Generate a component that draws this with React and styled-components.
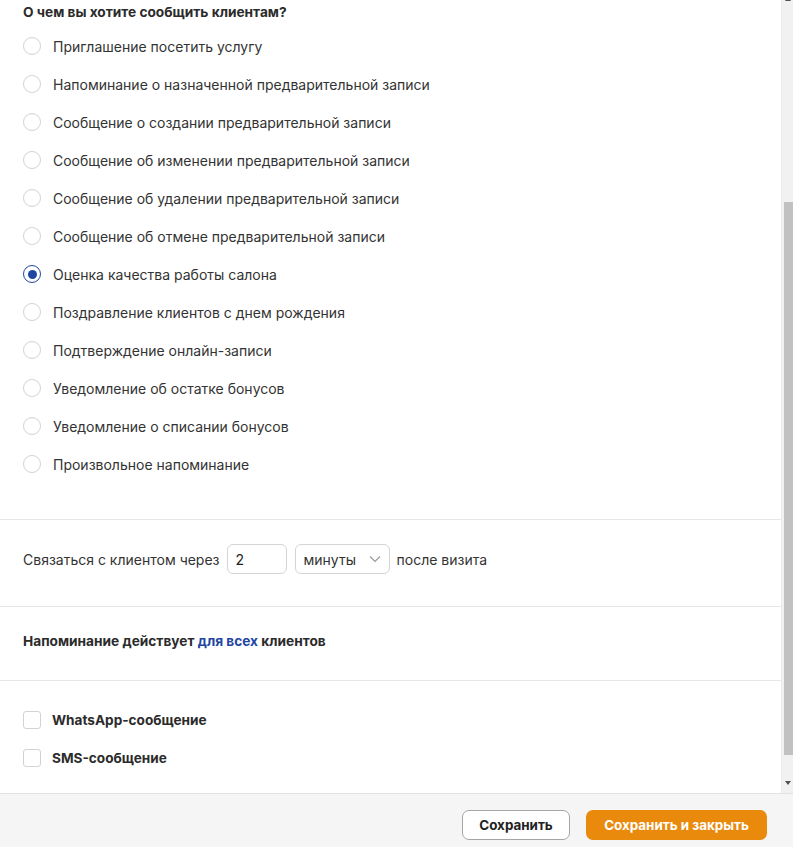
import React from 'react';
import styled, { createGlobalStyle } from 'styled-components';

const GlobalStyle = createGlobalStyle`
	body {
		margin: 0;
		font-family: Inter, "Noto Sans", sans-serif;
		color: #333;
		background: #fff;
	}
`;

const Page = styled.div`
	height: 847px;
	display: flex;
	flex-direction: column;
	overflow: hidden;
`;

const Body = styled.div`
	flex: 1;
	display: flex;
	min-height: 0;
`;

const Content = styled.div`
	flex: 1;
	min-width: 0;
`;

const Section = styled.div`
	padding: ${p => p.pad || '0'};
	padding-left: 23px;
	border-bottom: ${p => (p.last ? 'none' : '1px solid #e6e6e6')};
`;

const Heading = styled.div`
	margin-top: 2px;
	font-size: 13.7px;
	font-weight: 700;
	line-height: 20px;
	color: #2b2b2b;
`;

const List = styled.div`
	margin-top: 5px;
	display: flex;
	flex-direction: column;
`;

const Option = styled.label`
	height: 38px;
	display: flex;
	align-items: center;
	gap: 12px;
	font-size: 14px;
	color: #333;
	cursor: pointer;
`;

const Radio = styled.span`
	width: 18px;
	height: 18px;
	box-sizing: border-box;
	border-radius: 50%;
	border: ${p => (p.checked ? '1.5px solid #1f46a3' : '1px solid #d2d2d2')};
	display: flex;
	align-items: center;
	justify-content: center;
	flex-shrink: 0;

	&::after {
		content: '';
		display: ${p => (p.checked ? 'block' : 'none')};
		width: 9px;
		height: 9px;
		border-radius: 50%;
		background: #1f46a3;
	}
`;

const Row = styled.div`
	display: flex;
	align-items: center;
	gap: 7px;
	font-size: 14px;
	color: #333;
`;

const NumInput = styled.div`
	width: 60px;
	height: 30px;
	box-sizing: border-box;
	border: 1px solid #d4d4d4;
	border-radius: 6px;
	padding-left: 8px;
	display: flex;
	align-items: center;
	font-size: 14px;
	color: #222;
`;

const Select = styled.div`
	width: 95px;
	height: 30px;
	margin-left: 1px;
	box-sizing: border-box;
	border: 1px solid #d4d4d4;
	border-radius: 6px;
	padding: 0 8px;
	display: flex;
	align-items: center;
	justify-content: space-between;
	font-size: 14px;
	color: #333;
`;

const Note = styled.div`
	font-size: 13.7px;
	font-weight: 700;
	line-height: 20px;
	color: #2b2b2b;
`;

const Accent = styled.span`
	color: #1f46a3;
`;

const CheckItem = styled.label`
	height: 38px;
	display: flex;
	align-items: center;
	gap: 11px;
	font-size: 13.6px;
	font-weight: 700;
	color: #2b2b2b;
`;

const Box = styled.span`
	width: 18px;
	height: 18px;
	box-sizing: border-box;
	border: 1px solid #d2d2d2;
	border-radius: 3px;
	flex-shrink: 0;
`;

const Track = styled.div`
	width: 11px;
	background: #f1f1f1;
	border-left: 1px solid #ececec;
	display: flex;
	flex-direction: column;
	align-items: flex-end;
`;

const Arrow = styled.div`
	width: 0;
	height: 0;
	margin-right: 2px;
	border-left: 3.5px solid transparent;
	border-right: 3.5px solid transparent;
	${p =>
		p.up
			? 'border-bottom: 4px solid #505050; margin-top: -3px;'
			: 'border-top: 4px solid #505050; margin-top: 26px;'}
`;

const Thumb = styled.div`
	width: 9px;
	height: 553px;
	margin-top: 201px;
	background: #c1c1c1;
`;

const Footer = styled.div`
	height: 54px;
	box-sizing: border-box;
	border-top: 1px solid #e2e2e2;
	background: #f5f5f5;
	display: flex;
	justify-content: flex-end;
	align-items: flex-start;
	gap: 16px;
	padding: 16px 26px 0 0;
`;

const Button = styled.button`
	height: 30px;
	box-sizing: border-box;
	padding: 0 12px;
	border-radius: 7px;
	font-family: Inter, "Noto Sans", sans-serif;
	font-size: 13.4px;
	font-weight: 700;
	cursor: pointer;
	border: ${p => (p.primary ? 'none' : '1px solid #a5a5a5')};
	background: ${p => (p.primary ? '#e98a0c' : '#fff')};
	color: ${p => (p.primary ? '#fff' : '#222')};
	width: ${p => p.w};
`;

const options = [
	'Приглашение посетить услугу',
	'Напоминание о назначенной предварительной записи',
	'Сообщение о создании предварительной записи',
	'Сообщение об изменении предварительной записи',
	'Сообщение об удалении предварительной записи',
	'Сообщение об отмене предварительной записи',
	'Оценка качества работы салона',
	'Поздравление клиентов с днем рождения',
	'Подтверждение онлайн-записи',
	'Уведомление об остатке бонусов',
	'Уведомление о списании бонусов',
	'Произвольное напоминание',
];

const Chevron = () => (
	<svg width="12" height="8" viewBox="0 0 12 8" fill="none">
		<path d="M1 1.5l5 5 5-5" stroke="#9a9a9a" strokeWidth="1.2" />
	</svg>
);

const App = () => {
	const selected = 6;
	return (
		<Page>
			<GlobalStyle />
			<Body>
				<Content>
					<Section pad="0 0 36px">
						<Heading>О чем вы хотите сообщить клиентам?</Heading>
						<List>
							{options.map((o, i) => (
								<Option key={o}>
									<Radio checked={i === selected} />
									{o}
								</Option>
							))}
						</List>
					</Section>
					<Section pad="24px 0 32px">
						<Row>
							Связаться с клиентом через
							<NumInput>2</NumInput>
							<Select>
								минуты
								<Chevron />
							</Select>
							после визита
						</Row>
					</Section>
					<Section pad="24px 0 29px">
						<Note>
							Напоминание действует <Accent>для всех</Accent> клиентов
						</Note>
					</Section>
					<Section pad="20px 0 0" last>
						<CheckItem>
							<Box />
							WhatsApp-сообщение
						</CheckItem>
						<CheckItem>
							<Box />
							SMS-сообщение
						</CheckItem>
					</Section>
				</Content>
				<Track>
					<Arrow up />
					<Thumb />
					<Arrow />
				</Track>
			</Body>
			<Footer>
				<Button w="108px">Сохранить</Button>
				<Button primary w="181px">Сохранить и закрыть</Button>
			</Footer>
		</Page>
	);
};

export default App;
